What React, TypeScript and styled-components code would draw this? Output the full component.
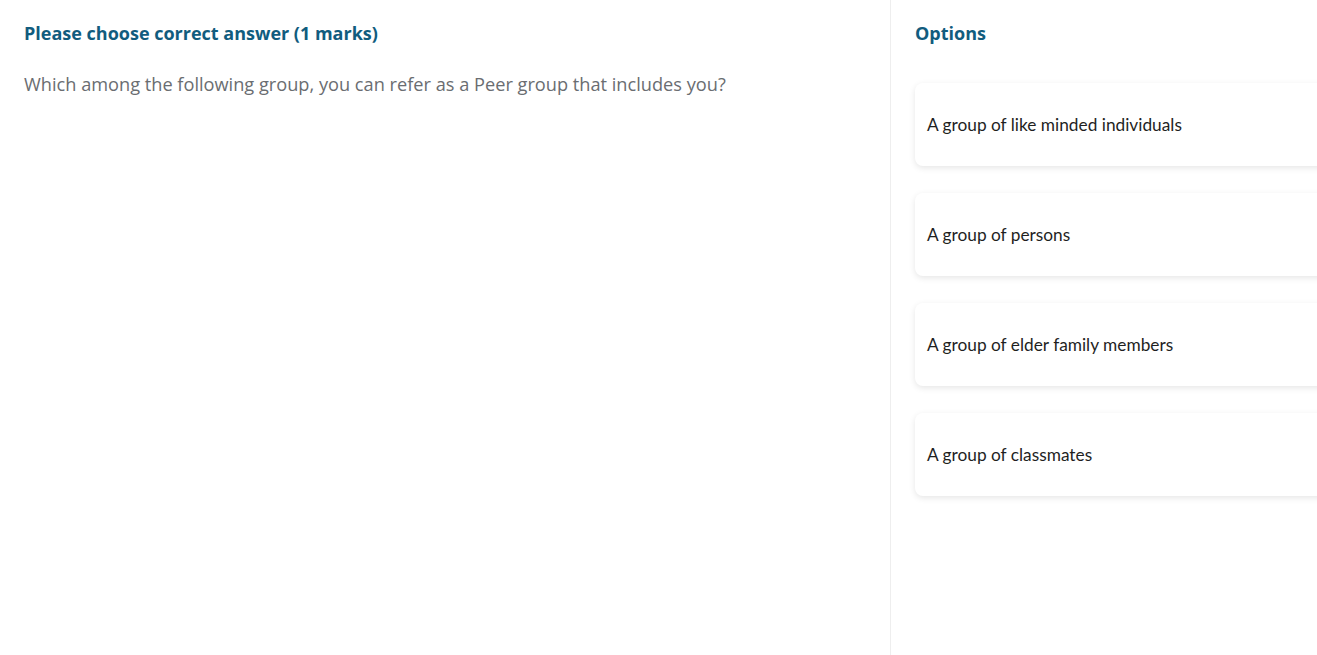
import * as React from 'react'
import styled, { createGlobalStyle } from 'styled-components'

const GlobalStyle = createGlobalStyle`
  html, body {
    margin: 0;
    padding: 0;
    background: #ffffff;
    overflow: hidden;
  }
  body {
    font-family: 'Open Sans', 'Noto Sans', sans-serif;
  }
`

const Page = styled.div`
  display: grid;
  grid-template-columns: 891px 460px;
  height: 655px;
  width: 1351px;
`

const QuestionPane = styled.section`
  padding: 21px 24px;
  border-right: 1px solid #eeeeee;
`

const Heading = styled.h2`
  margin: 0;
  font-family: 'Open Sans', sans-serif;
  font-weight: 700;
  font-size: 18px;
  line-height: 24px;
  color: #115c7e;
`

const QuestionText = styled.p`
  margin: 27px 0 0;
  font-family: 'Open Sans', sans-serif;
  font-size: 18.2px;
  line-height: 24px;
  color: #6a6d71;
`

const OptionsPane = styled.section`
  padding: 21px 24px;
`

const OptionList = styled.div`
  display: flex;
  flex-direction: column;
  gap: 27px;
  margin-top: 38px;
`

const OptionCard = styled.button`
  display: flex;
  align-items: center;
  height: 83px;
  padding: 0 12px;
  border: none;
  border-radius: 8px;
  background: #ffffff;
  box-shadow: 0 2px 6px rgba(0, 0, 0, 0.1);
  font-family: Lato, 'Open Sans', sans-serif;
  font-size: 17.3px;
  line-height: 22px;
  color: #1f1f1f;
  text-align: left;
  cursor: pointer;
`

const options = [
  'A group of like minded individuals',
  'A group of persons',
  'A group of elder family members',
  'A group of classmates',
]

export default function App() {
  return (
    <>
      <GlobalStyle />
      <Page>
        <QuestionPane>
          <Heading>Please choose correct answer (1 marks)</Heading>
          <QuestionText>
            Which among the following group, you can refer as a Peer group that
            includes you?
          </QuestionText>
        </QuestionPane>
        <OptionsPane>
          <Heading>Options</Heading>
          <OptionList>
            {options.map((option) => (
              <OptionCard key={option}>{option}</OptionCard>
            ))}
          </OptionList>
        </OptionsPane>
      </Page>
    </>
  )
}
